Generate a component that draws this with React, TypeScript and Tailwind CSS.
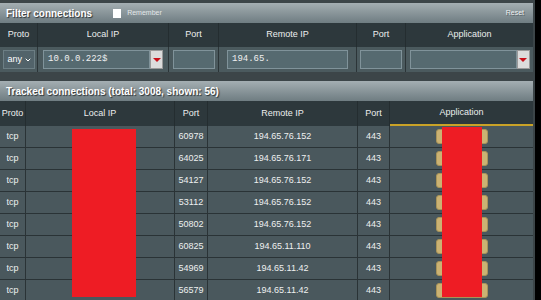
import React from "react";
import {ChevronDown} from "lucide-react";

type Conn = {
    port: string;
    remote: string;
    rport: string;
};

const CONNECTIONS: Conn[] = [
    {port: "60978", remote: "194.65.76.152", rport: "443"},
    {port: "64025", remote: "194.65.76.171", rport: "443"},
    {port: "54127", remote: "194.65.76.152", rport: "443"},
    {port: "53112", remote: "194.65.76.152", rport: "443"},
    {port: "50802", remote: "194.65.76.152", rport: "443"},
    {port: "60825", remote: "194.65.11.110", rport: "443"},
    {port: "54969", remote: "194.65.11.42", rport: "443"},
    {port: "56579", remote: "194.65.11.42", rport: "443"},
];

const FONT = "font-['Liberation_Sans',Arial,sans-serif]";
const MONO = "font-['Liberation_Mono','DejaVu_Sans_Mono',monospace]";

function DropButton() {
    return (
        <div className="w-[13px] h-[19px] bg-[#dcdcdc] border border-[#9a9a9a] flex items-center justify-center">
            <div className="w-0 h-0 border-l-[4px] border-r-[4px] border-t-[4px] border-l-transparent border-r-transparent border-t-[#c8101a]"/>
        </div>
    );
}

function TextBox({width, value}: { width: string; value?: string }) {
    return (
        <div className={`${width} h-[19px] bg-[#566a70] border border-[#80939a] flex items-center px-1 text-[9px] text-[#f0f0f0] ${MONO}`}>
            {value}
        </div>
    );
}

function SectionBar({children}: { children: React.ReactNode }) {
    return (
        <div className="h-[20px] flex items-center px-[6px] bg-gradient-to-b from-[#a4aeb2] to-[#6f7d82] text-white">
            {children}
        </div>
    );
}

export default function App() {
    return (
        <div className={`min-h-screen bg-black ${FONT}`}>
            <div className="w-[535px] h-[300px] bg-[#3c4548] pt-[3px] pr-[2px] overflow-hidden">

                {/* Filter connections */}
                <SectionBar>
                    <span className="text-[10px] font-bold [text-shadow:1px_1px_1px_#2a3235]">Filter connections</span>
                    <div className="ml-[21px] w-[8px] h-[9px] bg-white"/>
                    <span className="ml-[6px] text-[7px] text-[#e4e8e9]">Remember</span>
                    <span className="ml-auto mr-[3px] text-[7px] text-[#eef1f2] [text-shadow:1px_1px_0_#5a6569]">Reset</span>
                </SectionBar>

                <div className="flex h-[24px] bg-[#2d383c] text-[9px] text-[#eceeee]">
                    <div className="w-[37px] flex items-center justify-center">Proto</div>
                    <div className="w-px bg-[#242d30]"/>
                    <div className="w-[130px] flex items-center justify-center">Local IP</div>
                    <div className="w-px bg-[#242d30]"/>
                    <div className="w-[49px] flex items-center justify-center">Port</div>
                    <div className="w-px bg-[#242d30]"/>
                    <div className="w-[137px] flex items-center justify-center">Remote IP</div>
                    <div className="w-px bg-[#242d30]"/>
                    <div className="w-[48px] flex items-center justify-center">Port</div>
                    <div className="w-px bg-[#242d30]"/>
                    <div className="w-[127px] flex items-center justify-center">Application</div>
                </div>

                <div className="flex h-[25px] bg-[#4b5a5e]">
                    <div className="w-[37px] flex items-center justify-center">
                        <div className="w-[32px] h-[19px] bg-[#52636a] border border-[#6c7e84] flex items-center pl-[4px] gap-[2px] text-[9px] text-white">
                            any
                            <ChevronDown size={8} strokeWidth={3}/>
                        </div>
                    </div>
                    <div className="w-px bg-[#2c3538]"/>
                    <div className="w-[130px] flex items-center justify-center">
                        <TextBox width="w-[107px]" value="10.0.0.222$"/>
                        <DropButton/>
                    </div>
                    <div className="w-px bg-[#2c3538]"/>
                    <div className="w-[49px] flex items-center justify-center">
                        <TextBox width="w-[42px]"/>
                    </div>
                    <div className="w-px bg-[#2c3538]"/>
                    <div className="w-[137px] flex items-center justify-center">
                        <TextBox width="w-[121px]" value="194.65."/>
                    </div>
                    <div className="w-px bg-[#2c3538]"/>
                    <div className="w-[48px] flex items-center justify-center">
                        <TextBox width="w-[42px]"/>
                    </div>
                    <div className="w-px bg-[#2c3538]"/>
                    <div className="w-[127px] flex items-center justify-center">
                        <TextBox width="w-[107px]"/>
                        <DropButton/>
                    </div>
                </div>

                <div className="h-[9px]"/>

                {/* Tracked connections */}
                <SectionBar>
                    <span className="text-[10px] font-bold [text-shadow:1px_1px_1px_#2a3235]">
                        Tracked connections (total: 3008, shown: 56)
                    </span>
                </SectionBar>

                <div className="relative">
                    <div className="flex h-[25px] bg-[#2d383c] text-[9px] text-[#eceeee]">
                        <div className="w-[25px] flex items-center justify-center">Proto</div>
                        <div className="w-px bg-[#242d30]"/>
                        <div className="w-[148px] flex items-center justify-center">Local IP</div>
                        <div className="w-px bg-[#242d30]"/>
                        <div className="w-[32px] flex items-center justify-center">Port</div>
                        <div className="w-px bg-[#242d30]"/>
                        <div className="w-[149px] flex items-center justify-center">Remote IP</div>
                        <div className="w-px bg-[#242d30]"/>
                        <div className="w-[31px] flex items-center justify-center">Port</div>
                        <div className="w-px bg-[#242d30]"/>
                        <div className="w-[143px] flex items-center justify-center border-b-2 border-[#c9a227]">Application</div>
                    </div>

                    {CONNECTIONS.map((c, i) => (
                        <div key={i} className="flex h-[22px] bg-[#4a585d] border-b border-[#2a3336] text-[9px] text-[#eef0f0]">
                            <div className="w-[25px] flex items-center justify-center">tcp</div>
                            <div className="w-px bg-[#2a3336]"/>
                            <div className="w-[148px]"/>
                            <div className="w-px bg-[#2a3336]"/>
                            <div className="w-[32px] flex items-center justify-center">{c.port}</div>
                            <div className="w-px bg-[#2a3336]"/>
                            <div className="w-[149px] flex items-center justify-center">{c.remote}</div>
                            <div className="w-px bg-[#2a3336]"/>
                            <div className="w-[31px] flex items-center justify-center">{c.rport}</div>
                            <div className="w-px bg-[#2a3336]"/>
                            <div className="w-[143px] flex items-center justify-center">
                                <div className="w-[52px] h-[15px] rounded-[3px] bg-[#cbb273] border border-[#a89358]"/>
                            </div>
                        </div>
                    ))}

                    {/* redactions */}
                    <div className="absolute left-[72px] top-[28px] w-[64px] h-[168px] bg-[#ee1c24]"/>
                    <div className="absolute left-[442px] top-[26px] w-[40px] h-[170px] bg-[#ee1c24]"/>
                </div>
            </div>
        </div>
    );
}
